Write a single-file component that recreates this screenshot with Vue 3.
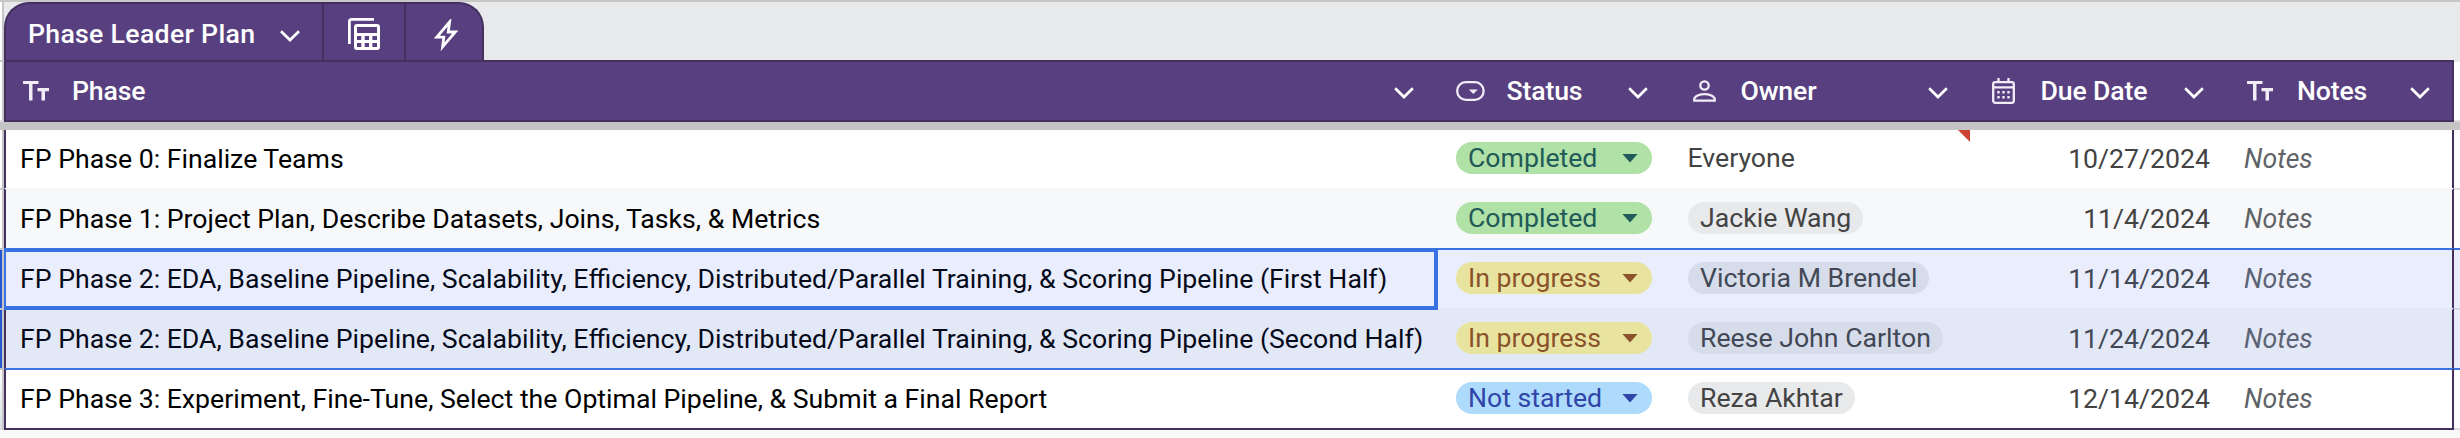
<script setup>
const columns = [
  { key: 'phase', label: 'Phase', icon: 'text' },
  { key: 'status', label: 'Status', icon: 'chip' },
  { key: 'owner', label: 'Owner', icon: 'person' },
  { key: 'due', label: 'Due Date', icon: 'calendar' },
  { key: 'notes', label: 'Notes', icon: 'text' },
]
const rows = [
  { phase: 'FP Phase 0: Finalize Teams', status: 'Completed', tone: 'done', owner: 'Everyone', plain: true, due: '10/27/2024' },
  { phase: 'FP Phase 1: Project Plan, Describe Datasets, Joins, Tasks, & Metrics', status: 'Completed', tone: 'done', owner: 'Jackie Wang', due: '11/4/2024' },
  { phase: 'FP Phase 2: EDA, Baseline Pipeline, Scalability, Efficiency, Distributed/Parallel Training, & Scoring Pipeline (First Half)', status: 'In progress', tone: 'progress', owner: 'Victoria M Brendel', due: '11/14/2024', selected: true, active: true },
  { phase: 'FP Phase 2: EDA, Baseline Pipeline, Scalability, Efficiency, Distributed/Parallel Training, & Scoring Pipeline (Second Half)', status: 'In progress', tone: 'progress', owner: 'Reese John Carlton', due: '11/24/2024', selected: true },
  { phase: 'FP Phase 3: Experiment, Fine-Tune, Select the Optimal Pipeline, & Submit a Final Report', status: 'Not started', tone: 'todo', owner: 'Reza Akhtar', due: '12/14/2024' },
]
</script>

<template>
  <main class="sheet">
    <div class="tabs">
      <div class="gutter"></div>
      <div class="tab">
        <div class="tab-name">
          <span>Phase Leader Plan</span>
          <svg class="tab-chev" width="20" height="12" viewBox="0 0 20 12"><path d="M1 1.200 10 10 19 1.200" /></svg>
        </div>
        <div class="tab-btn calc">
          <svg width="32" height="32" viewBox="0 0 32 32">
            <path d="M1.400 26V3.500Q1.400 1.400 3.500 1.400H26" fill="none" stroke="#fff" stroke-width="2.800" />
            <path fill="#fff" fill-rule="evenodd" d="M9 6h20q3 0 3 3v20q0 3-3 3H9q-3 0-3-3V9q0-3 3-3ZM9 9h20v6H9ZM9 18h4.300v4H9ZM16.700 18h4.300v4h-4.300ZM24.400 18H29v4h-4.600ZM9 25h4.300v4H9ZM16.700 25h4.300v4h-4.300ZM24.400 25H29v4h-4.600Z" />
          </svg>
        </div>
        <div class="tab-btn bolt">
          <svg width="26" height="32" viewBox="0 0 26 32"><path d="M15.600 3 2.800 18.200H9.800L8.600 27.800 21.300 13H14.200Z" fill="none" stroke="#fff" stroke-width="2.800" /></svg>
        </div>
      </div>
    </div>

    <div class="line head-line">
      <div class="gutter"></div>
      <div class="grid head">
        <div v-for="c in columns" :key="c.key" class="th" :class="c.key">
          <span class="ic">
            <svg v-if="c.icon === 'text'" width="26" height="20" viewBox="0 0 26 20"><path d="M0 0H15.500V3H9.500V19.500H6V3H0ZM14.500 7H26V10.200H22V19.500H18.500V10.200H14.500Z" fill="#f1edf7" /></svg>
            <svg v-else-if="c.icon === 'chip'" width="29" height="20" viewBox="0 0 29 20"><rect x="1.200" y="1.200" width="26.400" height="17.600" rx="8.500" /><path d="M12.800 8.500h9l-4.500 4.600Z" fill="#f1edf7" /></svg>
            <svg v-else-if="c.icon === 'person'" width="23" height="22" viewBox="0 0 23 22"><circle cx="11.500" cy="5.500" r="4.200" /><path d="M1.300 20.700V18.300C3.300 15.400 7.500 14.200 11.500 14.200s8.200 1.200 10.200 4.100v2.400Z" /></svg>
            <svg v-else width="23" height="26" viewBox="0 0 23 26"><rect x="1.200" y="4.200" width="20.600" height="20.600" rx="2" /><path d="M1 9.300H22M6.500 0V4M16.500 0V4" /><path fill="#f1edf7" d="M5.300 13h2.400v2.400H5.300ZM10.300 13h2.400v2.400h-2.400ZM15.300 13h2.400v2.400h-2.400ZM5.300 18h2.400v2.400H5.300ZM10.300 18h2.400v2.400h-2.400ZM15.300 18h2.400v2.400h-2.400Z" /></svg>
          </span>
          <span class="label">{{ c.label }}</span>
          <svg class="chev" width="20" height="12" viewBox="0 0 20 12"><path d="M1.200 1.200 10 10 18.800 1.200" /></svg>
        </div>
      </div>
      <div class="outside"></div>
    </div>
    <div class="freeze"></div>

    <div v-for="(r, i) in rows" :key="i" class="line row" :class="['r' + i, { selected: r.selected }]">
      <div class="gutter"></div>
      <div class="grid body">
        <div class="td phase" :class="{ active: r.active }">{{ r.phase }}</div>
        <div class="td status">
          <span class="chip" :class="r.tone">{{ r.status }}<i class="caret"></i></span>
        </div>
        <div class="td owner" :class="{ noted: r.plain }"><span :class="r.plain ? 'plain' : 'person-chip'">{{ r.owner }}</span></div>
        <div class="td due">{{ r.due }}</div>
        <div class="td notes">Notes</div>
      </div>
      <div class="outside"></div>
    </div>
  </main>
</template>

<style>
body { margin: 0; overflow: hidden; }
</style>

<style scoped>
* { box-sizing: border-box; }
.sheet { width: 2460px; height: 438px; overflow: hidden; background: #f8f9f8; font-family: Roboto, sans-serif; font-size: 26.667px; color: #000; }
svg { display: block; flex: none; }
.gutter { flex: none; width: 4px; background: #fff; border-right: 2px solid #c5c6c8; }
.tabs { height: 60px; border-top: 2px solid #c7c7c7; background: #e8e9eb; display: flex; }
.tab { display: flex; width: 480px; height: 58px; background: #584080; border: 2px solid #43305f; border-bottom: 0; border-radius: 25px 25px 0 0; color: #fff; }
.tab-name { display: flex; align-items: center; width: 316px; padding: 3px 0 0 22px; font-weight: 500; letter-spacing: 0.3px; white-space: nowrap; }
.tab-name span { width: 228px; }
.tab-chev { margin: 4px 0 0 24px; }
.tab-chev, .chev { fill: none; stroke: #fff; stroke-width: 2.7; }
.tab-btn { border-left: 2px solid #43305f; }
.calc { width: 82px; padding: 14px 0 0 24px; }
.bolt { width: 78px; padding: 15px 0 0 28px; }
.line { display: flex; height: 60px; }
.head-line { height: 62px; }
.head-line .gutter { border-top: 2px solid #c5c6c8; border-bottom: 2px solid #dcdcde; }
.head-line .outside { border-top: 2px solid #e8e9eb; border-bottom: 2px solid #dcdcde; }
.grid { display: grid; grid-template-columns: 1430px 234px 300px 256px 1fr; width: 2450px; flex: none; border-left: 2px solid #43305f; border-right: 2px solid #43305f; }
.head { background: #584080; border-top: 2px solid #43305f; border-bottom: 2px solid #43305f; color: #fff; font-weight: 500; letter-spacing: -0.15px; }
.th { display: flex; align-items: center; padding: 0 22px 0 17px; white-space: nowrap; }
.th.status { padding-left: 20px; }
.th.owner { padding-left: 23px; }
.th.due { padding-left: 22px; }
.th.notes { padding-left: 21px; }
.ic { width: 49px; flex: none; }
.status .ic { width: 50.5px; }
.owner .ic { width: 47.5px; }
.due .ic { width: 48.5px; }
.notes .ic { width: 50px; }
.ic svg { fill: none; stroke: #f1edf7; stroke-width: 2.3; }
.ic svg path[fill='#f1edf7'] { stroke: none; fill: #f1edf7; }
.chev { margin-left: auto; margin-top: 4px; }
.outside { flex: 1; background: #fff; }
.freeze { height: 8px; background: #c5c5c5; }
.row .gutter, .row .outside { border-top: 2px solid #dcdcde; }
.row .gutter { border-top-color: #c5c6c8; }
.body { background: #fff; border-top: 2px solid #fff; }
.r0 { height: 58px; }
.r0 .gutter, .r0 .body, .r0 .outside { border-top: 0; }
.r1 .body { background: #f7f8fa; border-top-color: #f7f8fa; }
.r2 .body { background: #eaeefc; }
.r3 .body { background: #e2e8f5; border-top-color: #e2e8f5; }
.r2 .body, .r4 .body, .r2 .outside, .r4 .outside { border-top-color: #3872e0; }
.selected .gutter { background: #2556d2; }
.selected .outside { background: #eaeefc; }
.r3 .outside { border-top-color: #ced3e2; }
.r4 { height: 62px; }
.r4 .body { border-bottom: 2px solid #43305f; }
.r4 .outside { border-bottom: 2px solid #dcdcde; }
.r4 .gutter { background: linear-gradient(#fff, #d9dde4); }
.td { display: flex; align-items: center; position: relative; line-height: 31px; padding-top: 1px; padding-bottom: 2px; white-space: nowrap; color: #434343; }
.td.phase, .td.due, .td.notes { padding-bottom: 1px; }
.td.phase { color: #000; padding-left: 14px; }
.selected .td { color: #424855; }
.selected .td.phase { color: #050a1b; }
.td.status, .td.owner { align-items: flex-start; padding-top: 12px; }
.td.status { padding-left: 20px; }
.td.owner { padding-left: 17.500px; }
.td.due { justify-content: flex-end; padding-right: 16px; }
.td.notes { padding-left: 18px; font-style: italic; color: #5f6368; }
.selected .td.notes { color: #5c6375; }
.active::after { content: ''; position: absolute; z-index: 1; inset: -2px; border: 4px solid #3872e0; border-left-width: 2px; }
.noted::after { content: ''; position: absolute; top: 0; right: 0; width: 12px; height: 12px; background: #cc4331; clip-path: polygon(0 0, 100% 0, 100% 100%); }
.chip { display: flex; align-items: center; justify-content: space-between; width: 196px; height: 32px; border-radius: 16px; padding: 1px 14px 0 12px; }
.caret { width: 16px; height: 9px; margin-top: -1px; background: currentColor; clip-path: polygon(0 0, 100% 0, 50% 100%); }
.done { background: #b0e1a6; color: #215a58; }
.progress { background: #e8e4a0; color: #8a532c; }
.todo { background: #aedafc; color: #3045a8; }
.plain { padding-top: 1px; }
.person-chip { height: 32px; border-radius: 16px; padding: 1px 12px 0; margin-left: 0.5px; background: #e8e9eb; }
.selected .person-chip { background: #d6dcea; }
</style>
